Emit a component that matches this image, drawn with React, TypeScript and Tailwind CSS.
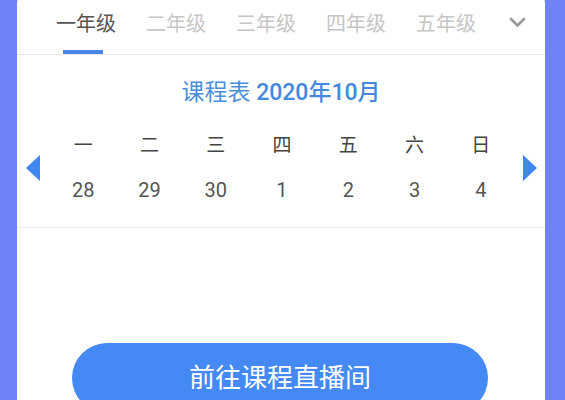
const tabs = ["一年级", "二年级", "三年级", "四年级", "五年级"];
const weekdays = ["一", "二", "三", "四", "五", "六", "日"];
const dates = ["28", "29", "30", "1", "2", "3", "4"];

function Arrow({ dir }: { dir: "left" | "right" }) {
  return (
    <svg width="16" height="26" viewBox="0 0 16 26">
      {dir === "left" ? (
        <polygon points="15,0 15,26 1,13" fill="#3f86f0" />
      ) : (
        <polygon points="1,0 1,26 15,13" fill="#3f86f0" />
      )}
    </svg>
  );
}

export default function App() {
  return (
    <div
      className="h-[400px] w-[565px] overflow-hidden bg-[#6e83f5] pl-[17px] pr-[20px]"
      style={{ fontFamily: "Roboto, 'Noto Sans CJK SC', sans-serif" }}
    >
      <div className="-mt-[10px] h-[420px] rounded-t-[14px] bg-white">
        {/* grade tabs */}
        <div className="flex h-[65px] items-end border-b border-[#e6e6e6] pl-[24px]">
          {tabs.map((t, i) => (
            <div key={t} className="flex w-[90px] flex-col items-center">
              <span
                className={
                  i === 0
                    ? "text-[20px] leading-[20px] text-[#555]"
                    : "text-[20px] leading-[20px] text-[#c6c6c6]"
                }
              >
                {t}
              </span>
              <span
                className={
                  i === 0
                    ? "mt-[16px] mr-[6px] h-[4px] w-[40px] bg-[#4a86e8]"
                    : "mt-[16px] h-[4px] w-[40px]"
                }
              />
            </div>
          ))}
          <div className="mb-[26px] ml-[14px] flex w-[24px] justify-center">
            <svg width="17" height="11" viewBox="0 0 17 11">
              <polyline
                points="2,2 8.5,8.5 15,2"
                fill="none"
                stroke="#999"
                strokeWidth="2.6"
                strokeLinecap="round"
                strokeLinejoin="round"
              />
            </svg>
          </div>
        </div>

        {/* title */}
        <div className="mt-[26px] text-center text-[23px] leading-[24px] text-[#4a8fdc]">
          课程表 <span className="font-medium text-[#4688dc]">2020年10月</span>
        </div>

        {/* calendar */}
        <div className="mt-[19px] flex items-center">
          <div className="flex w-[33px] pl-[8px]">
            <Arrow dir="left" />
          </div>
          <div className="grid w-[464px] grid-cols-7">
            {weekdays.map((w) => (
              <div
                key={w}
                className="flex h-[44px] items-center justify-center text-[19px] text-[#444]"
              >
                {w}
              </div>
            ))}
            {dates.map((d) => (
              <div
                key={d}
                className="flex h-[44px] items-center justify-center text-[20px] text-[#555]"
              >
                {d}
              </div>
            ))}
          </div>
          <div className="flex pl-[8px]">
            <Arrow dir="right" />
          </div>
        </div>

        <div className="mt-[15px] border-t border-[#ececec]" />

        {/* action button */}
        <div className="mt-[115px] pl-[55px]">
          <button className="flex h-[70px] w-[416px] items-center justify-center rounded-full bg-[#4589f4] text-[26px] text-white">
            前往课程直播间
          </button>
        </div>
      </div>
    </div>
  );
}
